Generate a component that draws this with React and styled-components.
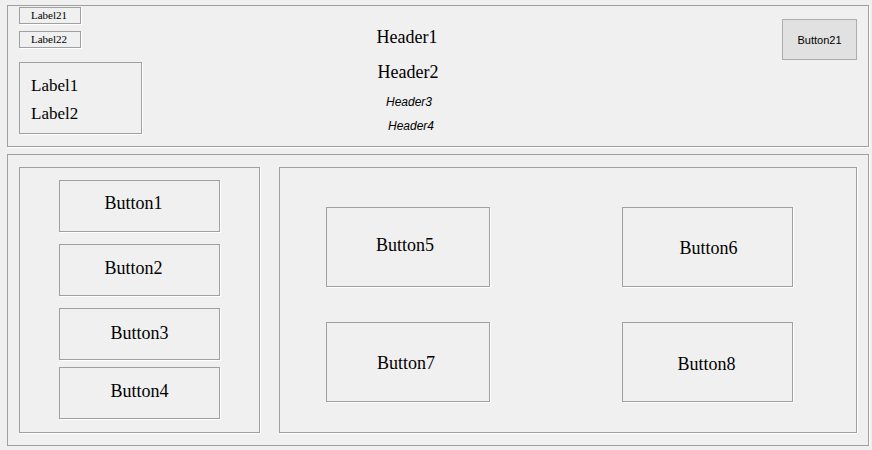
import React from "react";
import styled, { createGlobalStyle, css } from "styled-components";

const GlobalStyle = createGlobalStyle`
  html, body {
    margin: 0;
    background: #f0f0f0;
  }
  body {
    font-family: "Liberation Serif", "Times New Roman", serif;
    color: #000;
  }
`;

// shift the text inside a centered box by dx / dy pixels
const shift = ({ $dx = 0, $dy = 0 }) => css`
  padding: ${$dy > 0 ? 2 * $dy : 0}px ${$dx < 0 ? -2 * $dx : 0}px
    ${$dy < 0 ? -2 * $dy : 0}px ${$dx > 0 ? 2 * $dx : 0}px;
`;

const etched = css`
  border: 1px solid #a0a0a0;
  box-shadow: 1px 1px 0 #fff;
  box-sizing: border-box;
`;

const Page = styled.div`
  display: flex;
  flex-direction: column;
  gap: 7px;
  width: 862px;
  padding: 5px 0 0 7px;
`;

const TopPanel = styled.div`
  ${etched};
  display: flex;
  height: 142px;
  padding: 0 11px;
`;

const LabelColumn = styled.div`
  display: flex;
  flex-direction: column;
  width: 123px;
  padding-top: 1px;
`;

const SmallLabel = styled.div`
  ${etched};
  width: 62px;
  height: 17px;
  margin-top: ${(p) => p.$gap || 0}px;
  padding-left: 11px;
  font-size: 11px;
  line-height: 15px;
  white-space: nowrap;
`;

const LabelBox = styled.div`
  ${etched};
  width: 123px;
  height: 72px;
  margin-top: 14px;
  padding: 9px 0 0 11px;
`;

const BigLabel = styled.div`
  font-size: 17px;
  line-height: 28px;
`;

const HeaderColumn = styled.div`
  display: flex;
  flex-direction: column;
  align-items: center;
  width: 100px;
  margin-left: 215px;
`;

const Header = styled.div`
  margin-top: ${(p) => p.$gap}px;
  white-space: nowrap;
  ${shift};
  ${(p) =>
    p.$small
      ? css`
          font-family: "Liberation Sans", Arial, sans-serif;
          font-style: italic;
          font-size: 12px;
          line-height: 14px;
        `
      : css`
          font-size: 18px;
          line-height: 20px;
        `}
`;

const Spacer = styled.div`
  flex: 1;
`;

const SystemButton = styled.button`
  box-sizing: border-box;
  width: 75px;
  height: 41px;
  margin-top: 13px;
  padding: 0;
  border: 1px solid #adadad;
  background: #e1e1e1;
  font-family: "Liberation Sans", Arial, sans-serif;
  font-size: 11px;
  color: #000;
`;

const BottomPanel = styled.div`
  ${etched};
  display: flex;
  gap: 19px;
  height: 292px;
  padding: 12px 11px;
`;

const LeftGroup = styled.div`
  ${etched};
  display: flex;
  flex-direction: column;
  width: 241px;
  padding: 12px 0 0 39px;
`;

const RightGroup = styled.div`
  ${etched};
  flex: 1;
  display: grid;
  grid-template-columns: 164px 171px;
  grid-auto-rows: 80px;
  column-gap: 132px;
  row-gap: 35px;
  align-content: start;
  padding: 39px 0 0 46px;
`;

const FormButton = styled.button`
  ${etched};
  display: flex;
  align-items: center;
  justify-content: center;
  width: ${(p) => p.$w || 161}px;
  height: ${(p) => p.$h || 52}px;
  margin: ${(p) => p.$gap || 0}px 0 0;
  background: transparent;
  font-family: "Liberation Serif", "Times New Roman", serif;
  font-size: 18px;
  line-height: 20px;
  color: #000;
  white-space: nowrap;
  ${shift};
`;

const leftButtons = [
  { label: "Button1", gap: 0, dx: -6, dy: -3 },
  { label: "Button2", gap: 12, dx: -6, dy: -2 },
  { label: "Button3", gap: 12, dx: 0, dy: -1 },
  { label: "Button4", gap: 7, dx: 0, dy: -2 },
];

const gridButtons = [
  { label: "Button5", w: 164, dx: -3, dy: -2 },
  { label: "Button6", w: 171, dx: 1, dy: 1 },
  { label: "Button7", w: 164, dx: -2, dy: 1 },
  { label: "Button8", w: 171, dx: -1, dy: 2 },
];

export default function App() {
  return (
    <>
      <GlobalStyle />
      <Page>
        <TopPanel>
          <LabelColumn>
            <SmallLabel>Label21</SmallLabel>
            <SmallLabel $gap={7}>Label22</SmallLabel>
            <LabelBox>
              <BigLabel>Label1</BigLabel>
              <BigLabel>Label2</BigLabel>
            </LabelBox>
          </LabelColumn>
          <HeaderColumn>
            <Header $gap={21}>Header1</Header>
            <Header $gap={15} $dx={1}>Header2</Header>
            <Header $gap={13} $dx={2} $small>Header3</Header>
            <Header $gap={10} $dx={4} $small>Header4</Header>
          </HeaderColumn>
          <Spacer />
          <SystemButton>Button21</SystemButton>
        </TopPanel>
        <BottomPanel>
          <LeftGroup>
            {leftButtons.map((b) => (
              <FormButton key={b.label} $gap={b.gap} $dx={b.dx} $dy={b.dy}>
                {b.label}
              </FormButton>
            ))}
          </LeftGroup>
          <RightGroup>
            {gridButtons.map((b) => (
              <FormButton key={b.label} $w={b.w} $h={80} $dx={b.dx} $dy={b.dy}>
                {b.label}
              </FormButton>
            ))}
          </RightGroup>
        </BottomPanel>
      </Page>
    </>
  );
}
